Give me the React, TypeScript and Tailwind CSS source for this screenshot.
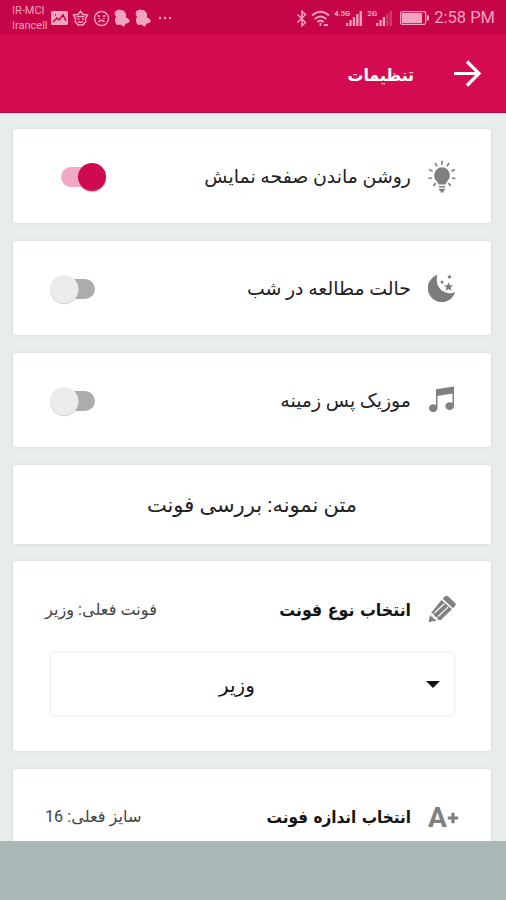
import type { ReactNode } from "react";

type CardProps = {
  children: ReactNode;
  className: string;
};

const Card = ({ children, className }: CardProps) => (
  <section
    className={`mr-[15px] ml-[13px] shrink-0 rounded-[3px] bg-white shadow-[0_0_3px_1px_#d9dddd] ${className}`}
  >
    {children}
  </section>
);

const Toggle = ({ on = false }: { on?: boolean }) => (
  <svg
    className={on ? "mt-[2px] ml-[11px] shrink-0" : "mt-[2px] shrink-0"}
    width="47"
    height="34"
    viewBox="0 0 47 34"
    role="switch"
    aria-checked={on}
  >
    <rect x={on ? 0 : 11} y="7" width="34" height="20" rx="10" fill={on ? "#f1a8c4" : "#acacac"} />
    <circle cx={on ? 31 : 14.3} cy="18" r="14.3" fill={on ? "#e9b3c8" : "#cfcfcf"} opacity="0.8" />
    <circle cx={on ? 31 : 14.3} cy="17" r="14" fill={on ? "#d00a50" : "#ececec"} />
  </svg>
);

const BulbIcon = () => (
  <svg width="28" height="34" viewBox="0 0 28 34" fill="#808080" className="mt-[2px]">
    <path d="M14 7.300a7.900 7.900 0 0 1 7.900 8c0 4.700-3.500 5.700-4.400 9.200h-7c-.9-3.500-4.400-4.500-4.400-9.200A7.900 7.900 0 0 1 14 7.300z" />
    <path d="M11 26h6v1.600h-6zM11 28.800h6V30l-1.500 1v1.500h-3V31L11 30z" />
    <path
      d="M14 .8v4M7 3l2 3.300M21 3l-2 3.300M1 9.500l3.600 1.700M27 9.500l-3.600 1.700M.5 18.500l3.700-.5M27.500 18.500l-3.700-.5M5.500 26l2-3M22.500 26l-2-3"
      fill="none"
      stroke="#808080"
      strokeWidth="1.700"
    />
  </svg>
);

const MoonIcon = () => (
  <svg width="28" height="28" viewBox="0 0 28 28" fill="#7c7c7c">
    <path d="M9.500.8A14 14 0 1 0 27.200 18C19 22.500 5.500 15 9.500.8z" />
    <path d="m20.500 8.200 1.300 3 3.200.3-2.400 2.100.7 3.200-2.800-1.700-2.800 1.700.7-3.200-2.400-2.100 3.200-.3z" />
    <path d="m21.500.6.6 1.300 1.500-.4-.8 1.300.8 1.300-1.500-.2-.6 1.400-.6-1.400-1.500.2.8-1.300-.8-1.300 1.500.4zM14 6l.6 1.300 1.400.2-1 1 .2 1.400L14 9.200l-1.200.7.2-1.400-1-1 1.400-.2z" />
  </svg>
);

const MusicIcon = () => (
  <svg width="26" height="26" viewBox="0 0 26 26" fill="#808080" className="-mt-[1px]">
    <path d="M7 3.200 25 .5v19.500a4.300 3.900 0 1 1-1.500-2.900V7.500L8.500 10v12a4.300 3.900 0 1 1-1.500-2.800z" />
  </svg>
);

const PencilIcon = () => (
  <svg width="28" height="28" viewBox="0 0 28 28" fill="#808080" className="-mt-[3px]">
    <path d="M16.500 1.800q2-2 3.800-.3l6.800 6.500q1.300 1.500 0 3l-2 2.200L14.600 3.700zM13.500 4.900l10.500 9.400-11.500 11-2.800-.8-.6-2.600-2.600-.4-.7-2.700-2.700-.7zM2.200 19.500l-1.700 7.700 7.900-1.800-1.200-1.300-1.700-.2-.5-2-2-.4z" />
    <path d="M6.500 18 16.500 8.500M10.200 21.500 20.300 11.800" stroke="#fff" strokeWidth="1.100" fill="none" />
  </svg>
);

const FontSizeIcon = () => (
  <span className="flex items-center leading-none font-bold text-[#808080]">
    <span className="text-[28px]">A</span>
    <svg width="12" height="12" viewBox="0 0 12 12" stroke="#808080" strokeWidth="3.200">
      <path d="M6 .8v10.400M.8 6h10.400" />
    </svg>
  </span>
);

const Signal = ({ filled, bars }: { filled: number; bars: number[] }) => (
  <svg width={bars.length * 3.400} height="16" fill="#f2a3c1" className="shrink-0">
    {bars.map((h, i) => (
      <rect key={i} x={i * 3.400} y={16 - h} width="2.300" height={h} opacity={i < filled ? 1 : 0.35} />
    ))}
  </svg>
);

const Bell = () => (
  <svg width="17" height="18" viewBox="0 0 17 18" fill="#f2a3c1">
    <path
      d="M1.500 2.500 4.500 1 9.500 2 11.500 4.500v4l3.500 2.300V13l-4 1.500-1 2.500-2-.5L6.500 15l-3.500.5L1.500 13v-3L2.500 8 1 5z"
      stroke="#f2a3c1"
      strokeLinejoin="round"
    />
  </svg>
);

const StatusBar = () => (
  <div className="flex h-[34px] shrink-0 items-center bg-[#c60448] pt-[2px] pr-[11px] pl-3 text-[#f2a3c1]">
    <div className="w-[39px] text-[11px] leading-[15.500px] whitespace-nowrap">
      <div>IR-MCI</div>
      <div>Irancell</div>
    </div>
    <div className="flex items-center gap-[4px]">
      <svg width="17" height="14" viewBox="0 0 17 14">
        <rect width="17" height="14" rx="1.500" fill="#f2a3c1" />
        <path d="m2 11 4-4 2 2 4-5 3 6M4 4h1" fill="none" stroke="#c60448" strokeWidth="1.500" />
      </svg>
      <svg width="17" height="17" viewBox="0 0 17 17" fill="none" stroke="#f2a3c1" strokeWidth="1.500">
        <path d="m8.500 1.200 2.300 3 4.700.8-2 3.500.3 3-2.800 3.500H6L3.200 11.500l.3-3-2-3.500 4.700-.8z" />
        <path d="M4.500 6.500h8M5.500 9h2M10 9h2M6 11.300q2.500 1.800 5 0" />
      </svg>
      <svg width="17" height="17" viewBox="0 0 17 17" fill="none" stroke="#f2a3c1" strokeWidth="1.400">
        <circle cx="8.500" cy="8.500" r="7" />
        <path d="m4.500 5.500 2.500 1M12.500 5.500l-2.500 1M5.500 12q3-3.500 6 0M6 8v1M11 8v1" />
      </svg>
      <Bell />
      <Bell />
      <svg width="14" height="4" fill="#f2a3c1" className="ml-[2px]">
        <circle cx="2" cy="2" r="1.200" />
        <circle cx="7" cy="2" r="1.200" />
        <circle cx="12" cy="2" r="1.200" />
      </svg>
    </div>
    <div className="ml-auto flex items-center">
      <svg width="12" height="17" viewBox="0 0 12 17" fill="none" stroke="#f2a3c1" strokeWidth="1.500">
        <path d="m1.500 4.500 8 8L6 15.800V1.200l3.500 3.300-8 8" />
      </svg>
      <svg width="20" height="17" viewBox="0 0 20 17" fill="none" stroke="#f2a3c1" strokeWidth="1.800" className="ml-[3px]">
        <path d="M1 5.500q8.500-7.500 17 0M3.800 9q5.700-5 11.400 0M6.500 12q3-2.500 6 0" />
        <path d="M9.500 13v3M13 15h4" />
      </svg>
      <div className="ml-[3px] flex">
        <span className="text-[7.500px] leading-[8px] font-bold">4.5G</span>
        <span className="-ml-[4px]">
          <Signal bars={[3, 6, 9, 12, 15]} filled={5} />
        </span>
      </div>
      <div className="ml-[4px] flex">
        <span className="text-[8px] leading-[8px] font-bold">2G</span>
        <span className="-ml-[1px]">
          <Signal bars={[3, 6, 9, 12, 15]} filled={3} />
        </span>
      </div>
      <svg width="30" height="14" viewBox="0 0 30 14" className="ml-[7px]">
        <rect x=".7" y=".7" width="25" height="12.600" rx="1.500" fill="none" stroke="#f2a3c1" strokeWidth="1.300" />
        <path d="M2 2h20v10H2zM27 4.500h2v5h-2z" fill="#f2a3c1" />
      </svg>
      <span className="ml-[4px] text-[16.500px] leading-5 whitespace-nowrap">2:58 PM</span>
    </div>
  </div>
);

type SwitchRowProps = {
  label: string;
  icon: ReactNode;
  on?: boolean;
};

const SwitchRow = ({ label, icon, on }: SwitchRowProps) => (
  <Card className="flex h-[94.500px] items-center pr-[35px] pl-[37px]">
    <Toggle on={on} />
    <span dir="rtl" className="mt-[3px] ml-auto text-[18.900px] whitespace-nowrap text-[#222]">
      {label}
    </span>
    <span className="ml-[17px] flex w-7 justify-center">{icon}</span>
  </Card>
);

type SectionTitleProps = {
  title: string;
  current: string;
  icon: ReactNode;
  titleSize: string;
};

const SectionTitle = ({ title, current, icon, titleSize }: SectionTitleProps) => (
  <div className="flex h-[36px] items-center">
    <span dir="rtl" className="text-[16.200px] whitespace-nowrap text-[#444]">
      {current}
    </span>
    <span
      dir="rtl"
      className={`ml-auto font-['DejaVu_Sans_Condensed','DejaVu_Sans',sans-serif] font-bold whitespace-nowrap text-[#151515] ${titleSize}`}
    >
      {title}
    </span>
    <span className="ml-[17px] flex w-7 items-center">{icon}</span>
  </div>
);

const App = () => {
  return (
    <div className="flex h-[900px] w-[506px] flex-col overflow-hidden bg-[#e8eded] font-[Roboto,'DejaVu_Sans',sans-serif]">
      <StatusBar />
      <header className="flex h-[78.500px] shrink-0 items-center justify-end border-b border-[#b50843] bg-[#d50b51] pr-[24px]">
        <h1
          dir="rtl"
          className="mt-[5px] font-['DejaVu_Sans_Condensed','DejaVu_Sans',sans-serif] text-[17.500px] font-bold whitespace-nowrap text-white"
        >
          تنظیمات
        </h1>
        <svg
          width="28"
          height="28"
          viewBox="0 0 28 28"
          fill="none"
          stroke="#fff"
          strokeWidth="3.200"
          className="ml-[40px]"
        >
          <path d="M0 14.500h24M13 2.500 25 14.500 13 26.500" />
        </svg>
      </header>

      <main className="flex min-h-0 flex-1 flex-col gap-[17.500px] overflow-hidden pt-4">
        <SwitchRow label="روشن ماندن صفحه نمایش" icon={<BulbIcon />} on />
        <SwitchRow label="حالت مطالعه در شب" icon={<MoonIcon />} />
        <SwitchRow label="موزیک پس زمینه" icon={<MusicIcon />} />

        <Card className="flex h-[79px] items-center justify-center">
          <p dir="rtl" className="mt-[3px] text-[21px] whitespace-nowrap text-[#222]">
            متن نمونه: بررسی فونت
          </p>
        </Card>

        <Card className="h-[190px] pt-[31px] pr-[35px] pl-[32px]">
          <SectionTitle
            title="انتخاب نوع فونت"
            current="فونت فعلی: وزیر"
            icon={<PencilIcon />}
            titleSize="text-[17.600px]"
          />
          <button
            type="button"
            className="mt-[25px] ml-[6px] flex h-[62px] w-[403px] items-center rounded-[3px] bg-white shadow-[0_0_2px_1px_#ececec]"
          >
            <span dir="rtl" className="mt-[2px] ml-[168px] text-[20px] text-[#151515]">
              وزیر
            </span>
            <svg width="14" height="7" viewBox="0 0 14 7" className="mr-[14px] ml-auto">
              <path d="M0 0h14L7 7z" fill="#111" />
            </svg>
          </button>
        </Card>

        <Card className="h-[190px] pt-[31px] pr-[35px] pl-[32px]">
          <SectionTitle
            title="انتخاب اندازه فونت"
            current="سایز فعلی: 16"
            icon={<FontSizeIcon />}
            titleSize="text-[17px]"
          />
        </Card>
      </main>

      <footer className="h-[59px] shrink-0 bg-[#aab7b6]" />
    </div>
  );
};

export default App;
